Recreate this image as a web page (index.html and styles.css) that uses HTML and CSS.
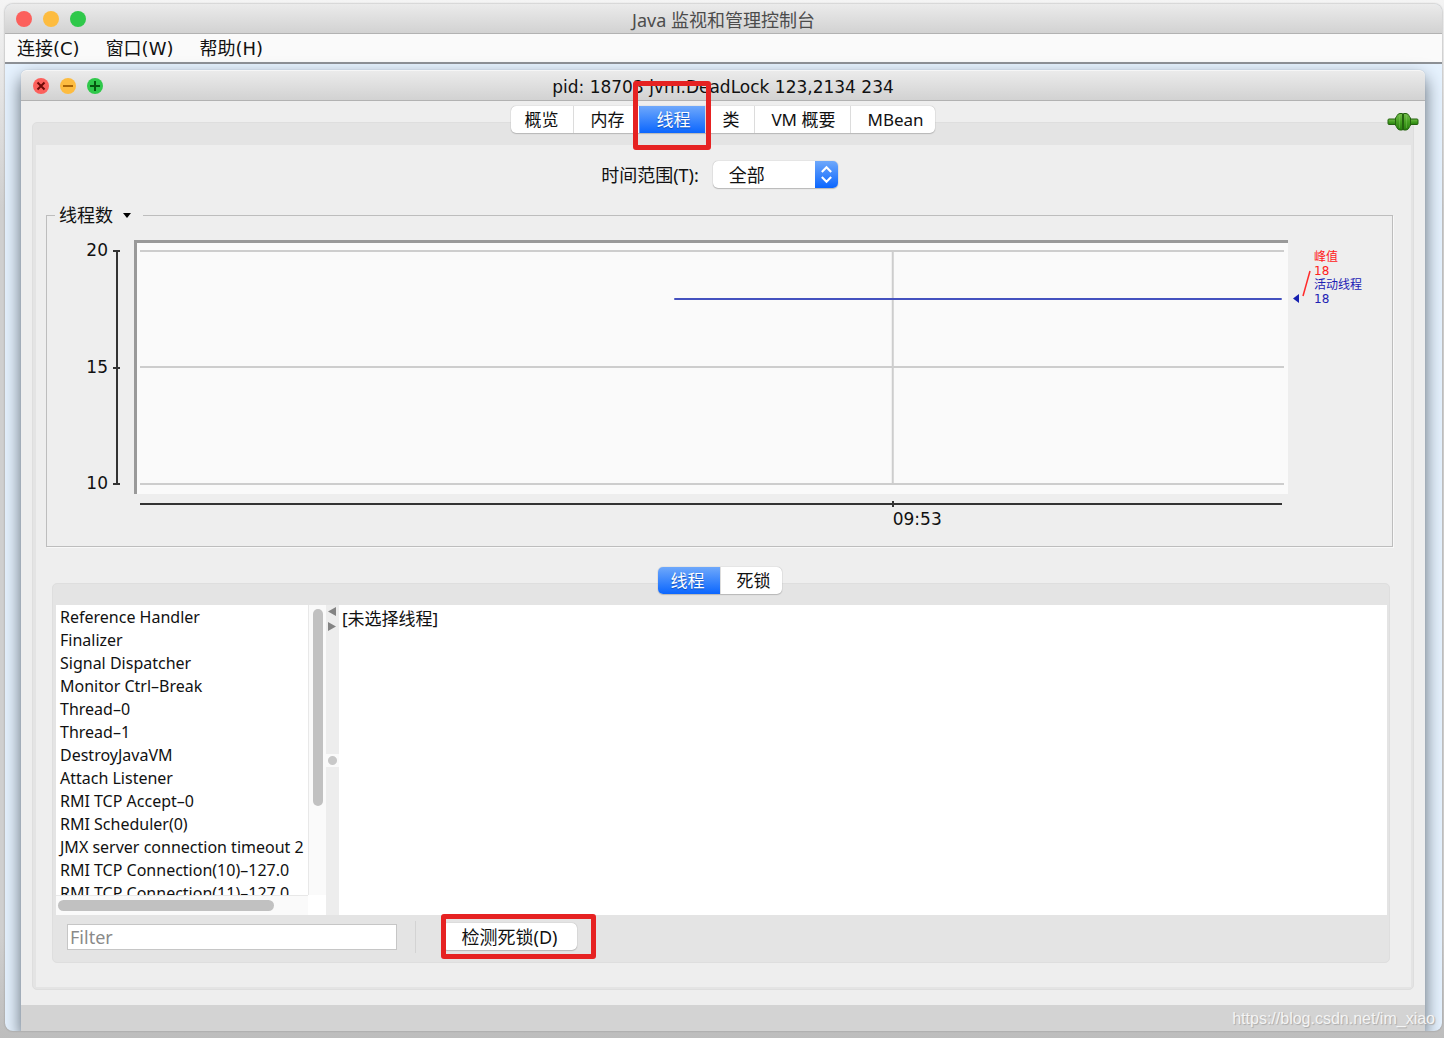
FILE: index.html
```html
<!DOCTYPE html>
<html lang="zh-CN">
<head>
<meta charset="utf-8">
<meta name="viewport" content="width=device-width, initial-scale=1">
<title>Java 监视和管理控制台</title>
<link rel="stylesheet" href="styles.css">
</head>
<body>
<div class="window">
  <header class="titlebar titlebar--app">
    <div class="lights">
      <button class="light light--close" type="button" aria-label="关闭"></button>
      <button class="light light--min" type="button" aria-label="最小化"></button>
      <button class="light light--max" type="button" aria-label="最大化"></button>
    </div>
    <h1 class="titlebar__text titlebar__text--app">Java 监视和管理控制台</h1>
  </header>
  <nav class="menubar">
    <button class="menubar__item" type="button">连接(C)</button>
    <button class="menubar__item" type="button">窗口(W)</button>
    <button class="menubar__item" type="button">帮助(H)</button>
  </nav>
  <main class="desktop">
    <section class="frame">
      <header class="titlebar titlebar--frame">
        <div class="lights">
          <button class="light light--close" type="button" aria-label="关闭连接">
            <svg viewBox="0 0 16 16"><path d="M4.500 4.500 11.500 11.500M11.500 4.500 4.500 11.500" stroke="#6e0a08"/></svg>
          </button>
          <button class="light light--min" type="button" aria-label="最小化连接">
            <svg viewBox="0 0 16 16"><path d="M3 8H13" stroke="#a86508"/></svg>
          </button>
          <button class="light light--max" type="button" aria-label="最大化连接">
            <svg viewBox="0 0 16 16"><path d="M3 8H13M8 3V13" stroke="#06570f"/></svg>
          </button>
        </div>
        <h2 class="titlebar__text titlebar__text--frame">pid: 18703 jvm.DeadLock 123,2134 234</h2>
      </header>

      <div class="frame__body">
        <div class="tabrow">
          <div class="tabs" role="tablist">
            <button class="tab" type="button" role="tab">概览</button>
            <button class="tab" type="button" role="tab">内存</button>
            <button class="tab tab--active tab--marked" type="button" role="tab" aria-selected="true">线程<span class="marker marker--tab"></span></button>
            <button class="tab" type="button" role="tab">类</button>
            <button class="tab" type="button" role="tab">VM 概要</button>
            <button class="tab" type="button" role="tab">MBean</button>
          </div>
          <svg class="plug" viewBox="0 0 32 20" role="img" aria-label="已连接">
            <defs>
              <linearGradient id="plugFill" x1="0" y1="0" x2="0" y2="1">
                <stop offset="0" stop-color="#74bd4c"/><stop offset="0.500" stop-color="#46a122"/><stop offset="1" stop-color="#27800d"/>
              </linearGradient>
            </defs>
            <rect x="1" y="7" width="30" height="5.500" rx="1" fill="url(#plugFill)" stroke="#24620f"/>
            <path d="M15.500 1.500H13C10 1.500 10 5 8.500 6V13.500C10 14.500 10 18 13 18H15.500ZM16.500 1.500H19C22 1.500 22 5 23.500 6V13.500C22 14.500 22 18 19 18H16.500Z" fill="url(#plugFill)" stroke="#24620f"/>
            <path d="M12.500 3.500V16M19.500 3.500V16" stroke="#8fce6c" stroke-opacity="0.350"/>
          </svg>
        </div>

        <div class="pane">
          <div class="pane__content">
            <div class="range">
              <label for="range">时间范围(T):</label>
              <span class="select">
                <select id="range"><option>全部</option></select>
                <svg class="select__arrows" viewBox="0 0 22 26"><path d="M6.500 10.500 11 6 15.500 10.500M6.500 15.500 11 20 15.500 15.500"/></svg>
              </span>
            </div>

            <fieldset class="group">
              <legend class="group__legend">
                <button class="group__toggle" type="button">线程数<span class="caret"></span></button>
              </legend>
              <div class="chart">
                <div class="chart__labels"><span>20</span><span>15</span><span>10</span></div>
                <div class="chart__scale"><i></i><i></i><i></i></div>
                <div class="plot">
                  <svg class="plot__lines" width="100%" height="100%">
                    <g stroke="#cdcdcd" stroke-width="2">
                      <line x1="0" y1="10" x2="100%" y2="10"/>
                      <line x1="0" y1="126" x2="100%" y2="126"/>
                      <line x1="0" y1="243" x2="100%" y2="243"/>
                      <line x1="65.800%" y1="10" x2="65.800%" y2="243"/>
                    </g>
                    <line x1="46.700%" y1="58" x2="99.800%" y2="58" stroke="#4451bf" stroke-width="2"/>
                  </svg>
                </div>
                <div class="keys">
                  <svg class="keys__lead" viewBox="0 0 26 60">
                    <path d="M11 54V63L5 58.500Z" fill="#1620b0"/>
                    <path d="M15 56 22 31" stroke="#ff2a2a" stroke-width="1.500"/>
                  </svg>
                  <dl class="keys__text">
                    <div class="keys__peak"><dt>峰值</dt><dd>18</dd></div>
                    <div class="keys__live"><dt>活动线程</dt><dd>18</dd></div>
                  </dl>
                </div>
                <div class="timeline">
                  <span class="timeline__before"></span>
                  <span class="timeline__label">09:53</span>
                </div>
              </div>
            </fieldset>

            <div class="tabrow tabrow--inner">
              <div class="tabs" role="tablist">
                <button class="tab tab--active" type="button" role="tab" aria-selected="true">线程</button>
                <button class="tab" type="button" role="tab">死锁</button>
              </div>
            </div>
            <div class="threads">
              <div class="split">
                <div class="listbox">
                  <ul class="list">
                    <li>Reference Handler</li>
                    <li>Finalizer</li>
                    <li>Signal Dispatcher</li>
                    <li>Monitor Ctrl–Break</li>
                    <li>Thread–0</li>
                    <li>Thread–1</li>
                    <li>DestroyJavaVM</li>
                    <li>Attach Listener</li>
                    <li>RMI TCP Accept–0</li>
                    <li>RMI Scheduler(0)</li>
                    <li>JMX server connection timeout 2</li>
                    <li>RMI TCP Connection(10)–127.0</li>
                    <li>RMI TCP Connection(11)–127.0</li>
                  </ul>
                  <div class="scroll scroll--v"><span></span></div>
                  <div class="scroll scroll--h"><span></span></div>
                </div>
                <div class="divider">
                  <svg class="divider__arrows" viewBox="0 0 13 30"><path d="M10 2V11L2 6.500ZM2 17V26L10 21.500Z" fill="#848484"/></svg>
                  <span class="divider__grip"></span>
                </div>
                <div class="detail">[未选择线程]</div>
              </div>
              <div class="actions">
                <input class="filter" type="text" placeholder="Filter" aria-label="Filter">
                <span class="actions__rule"></span>
                <button class="detect" type="button">检测死锁(D)<span class="marker marker--detect"></span></button>
              </div>
            </div>
          </div>
        </div>
      </div>
      <footer class="frame__footer"></footer>
    </section>
  </main>
  <a class="credit" href="https://blog.csdn.net/im_xiao">https://blog.csdn.net/im_xiao</a>
</div>
</body>
</html>
```
FILE: styles.css
```css
* { box-sizing: border-box; }

body {
  margin: 0;
  padding: 4px 2px 7px 5px;
  min-height: 100vh;
  display: flex;
  background: linear-gradient(#f4f4f4, #cfcfcf 20%, #cfcfcf 90%, #bdbdbd);
  font-family: "Noto Sans", "Noto Sans CJK SC", sans-serif;
  font-size: 17px;
  line-height: 24px;
  color: #111;
}

button, input, select { font: inherit; color: inherit; margin: 0; }
button { border: 0; padding: 0; background: none; }
h1, h2, ul, dl, dd { margin: 0; padding: 0; font-weight: 400; }

.window {
  position: relative;
  flex: 1;
  min-width: 0;
  display: flex;
  flex-direction: column;
  border-radius: 8px;
  overflow: hidden;
  background: #e6f2fe;
  box-shadow: 0 0 2px #8c8c8c;
}

/* Title bars */
.titlebar {
  display: grid;
  grid-template-columns: 90px 1fr 90px;
  align-items: center;
  height: 30px;
  background: linear-gradient(#ebebeb, #d2d2d2);
  border-bottom: 1px solid #b2b2b2;
}
.titlebar--app { padding: 0 11px; }
.titlebar--frame { height: 31px; padding: 0 12px; border-radius: 6px 6px 0 0; border-top: 1px solid #f6f6f6; }
.titlebar__text { padding-top: 2px; text-align: center; }
.titlebar__text--app { font-size: 18px; color: #4c4c4c; }
.titlebar__text--frame,
.chart__labels,
.timeline,
.keys,
.menubar { font-family: "DejaVu Sans", "Noto Sans CJK SC", sans-serif; }
.titlebar__text--frame { font-size: 17px; }
.lights { display: flex; gap: 11px; }
.light { width: 16px; height: 16px; border-radius: 50%; display: flex; }
.light svg { width: 16px; height: 16px; fill: none; stroke-width: 2; }
.light--close { background: #fc605c; }
.light--min { background: #fdbc40; }
.light--max { background: #2fc84a; }

.menubar {
  display: flex;
  gap: 26px;
  height: 30px;
  padding: 2px 12px 0;
  background: #fafafa;
  border-bottom: 2px solid #8d9196;
  font-size: 18px;
}

/* Connection frame */
.desktop { flex: 1; display: flex; padding: 6px 17px 0 16px; }
.frame {
  flex: 1;
  min-width: 0;
  display: flex;
  flex-direction: column;
  background: #eee;
  border-radius: 6px 6px 0 0;
  box-shadow: 0 0 1px #9aa3b5, 0 8px 18px #5d6772;
}
.frame__body { flex: 1; display: flex; flex-direction: column; padding: 5px 11px 15px; }
.frame__footer { height: 26px; background: #d3d3d3; }

/* Segmented tabs sit across the top edge of their pane */
.tabrow {
  position: relative;
  z-index: 1;
  display: flex;
  justify-content: center;
  margin-bottom: -11px;
}
.tabs {
  display: flex;
  height: 27px;
  border-radius: 5px;
  background: #fff;
  box-shadow: 0 0 1px #999, 0 1px 1px #bbb;
}
.tab { padding: 0 15px 0 16px; border-left: 1px solid #dcdcdc; line-height: 27px; }
.tab:first-child { padding-left: 13px; border-left: 0; border-radius: 5px 0 0 5px; }
.tab:last-child { padding-right: 11px; }
.tab--active {
  color: #fff;
  border-left-color: #5a98f8;
  background: linear-gradient(#6ea8fb, #0b66fe);
  text-shadow: 0 1px 1px #0a4bb8;
}
.tab--marked { position: relative; }
.plug { position: absolute; right: -5px; top: 6px; width: 32px; height: 20px; }

.marker { position: absolute; border: 5px solid #e62222; border-radius: 3px; pointer-events: none; }
.marker--tab { inset: -25px -6px -17px -7px; }
.marker--detect { inset: -9px -19px -9px -1px; }

.pane {
  flex: 1;
  display: flex;
  border: 1px solid #dedede;
  border-radius: 5px;
  padding: 22px 2px 2px 3px;
  background: #e4e4e4;
}
.pane__content {
  flex: 1;
  min-width: 0;
  display: flex;
  flex-direction: column;
  padding: 16px 18px 24px 10px;
  background: #eee;
}

.range { display: flex; justify-content: center; align-items: center; gap: 14px; height: 27px; font-size: 18px; }
.select { display: flex; width: 125px; position: relative; }
.select select {
  appearance: none;
  width: 100%;
  height: 27px;
  padding: 0 16px;
  border: 0;
  border-radius: 5px;
  background: #fff;
  box-shadow: 0 0 1px #999, 0 1px 1px #bbb;
}
.select__arrows {
  position: absolute;
  right: 0;
  top: 0;
  width: 23px;
  height: 27px;
  border-radius: 0 5px 5px 0;
  background: linear-gradient(#6ea8fb, #0b66fe);
  fill: none;
  stroke: #fff;
  stroke-width: 2;
  pointer-events: none;
}

/* Thread count chart */
.group {
  min-width: 0;
  margin: 15px 0 0;
  padding: 0 0 15px;
  border: 1px solid #bdbdbd;
  box-shadow: 1px 1px 0 #f8f8f8;
}
.group__legend { margin-left: 8px; padding: 0 12px 0 4px; }
.group__toggle { display: flex; align-items: center; gap: 10px; font-size: 18px; }
.caret { border: 4px solid transparent; border-top: 5px solid #000; border-bottom: 0; }
.chart {
  display: grid;
  grid-template-columns: 61px 26px 1fr 104px;
  grid-template-rows: 254px auto;
  margin-top: 13px;
}
.chart__labels {
  display: flex;
  flex-direction: column;
  justify-content: space-between;
  height: 257px;
  margin-top: -2px;
  text-align: right;
}
.chart__scale {
  display: flex;
  flex-direction: column;
  justify-content: space-between;
  width: 7px;
  height: 235px;
  margin: 10px 0 0 5px;
  background: linear-gradient(#333, #333) 3px 0 / 2px 100% no-repeat;
}
.chart__scale i { height: 2px; background: #333; }
.plot {
  padding: 0 4px 0 3px;
  border: solid #999;
  border-width: 3px 0 0 3px;
  background: #fafafa;
}
.plot__lines { display: block; margin-top: -2px; }
.keys { display: flex; padding: 10px 0 0; }
.keys__lead { width: 26px; height: 60px; margin-top: -10px; overflow: visible; }
.keys__text { font-size: 12px; line-height: 14px; }
.keys__peak { color: #ff2020; }
.keys__live { color: #1d22b4; }
.timeline { grid-column: 3; display: flex; margin: 9px 6px 0; border-top: 2px solid #333; }
.timeline__before { width: 66%; height: 6px; margin-top: -4px; border-right: 2px solid #333; }
.timeline__label { margin: 2px 0 0 -1px; }

/* Threads list and stack view */
.tabrow--inner { margin-top: 20px; }
.threads {
  flex: 1;
  display: flex;
  flex-direction: column;
  margin: 0 3px 0 6px;
  padding: 21px 2px 0 3px;
  border: 1px solid #dedede;
  border-radius: 5px;
  background: #e4e4e4;
}
.split { flex: 1; display: grid; grid-template-columns: 270px 13px 1fr; }
.listbox {
  display: grid;
  grid-template-columns: 252px 18px;
  grid-template-rows: 1fr 20px;
  background: #fff;
}
.list {
  height: 0;
  min-height: 100%;
  padding: 1px 0 0 4px;
  overflow: hidden;
  list-style: none;
  white-space: nowrap;
  font-size: 16px;
  line-height: 23px;
}
.scroll { background: #fafafa; }
.scroll span { display: block; border-radius: 6px; background: #c1c1c1; }
.scroll--v { padding: 4px 3px 0 4px; border-left: 1px solid #e8e8e8; }
.scroll--v span { height: 197px; }
.scroll--h { padding: 4px 0 0 2px; border-top: 1px solid #e8e8e8; }
.scroll--h span { width: 216px; height: 11px; }
.divider { display: flex; align-items: center; position: relative; background: #ededed; }
.divider__arrows { position: absolute; left: 0; top: 0; width: 13px; height: 30px; }
.divider__grip { width: 13px; height: 13px; background: radial-gradient(circle, #c8c8c8 4px, #fafafa 5px); }
.detail { padding: 2px 3px; background: #fff; }
.actions { display: flex; align-items: center; height: 47px; padding: 0 0 4px 11px; font-size: 18px; }
.filter {
  width: 330px;
  height: 26px;
  padding: 0 2px;
  border: 1px solid #c6c6c6;
  border-radius: 0;
  background: #fff;
}
.filter::placeholder { color: #8a8a8a; opacity: 1; }
.actions__rule { width: 1px; height: 32px; margin: 0 26px 0 18px; background: #d3d3d3; }
.detect {
  position: relative;
  width: 135px;
  height: 27px;
  border-radius: 5px;
  background: #fff;
  box-shadow: 0 0 1px #999, 0 1px 1px #bbb;
}

.credit {
  position: absolute;
  right: 7px;
  bottom: 1px;
  font-family: "Liberation Sans", sans-serif;
  font-size: 16px;
  line-height: 22px;
  color: #f4f4f4;
  text-decoration: none;
  text-shadow: 1px 1px 1px #aaa;
}
```
